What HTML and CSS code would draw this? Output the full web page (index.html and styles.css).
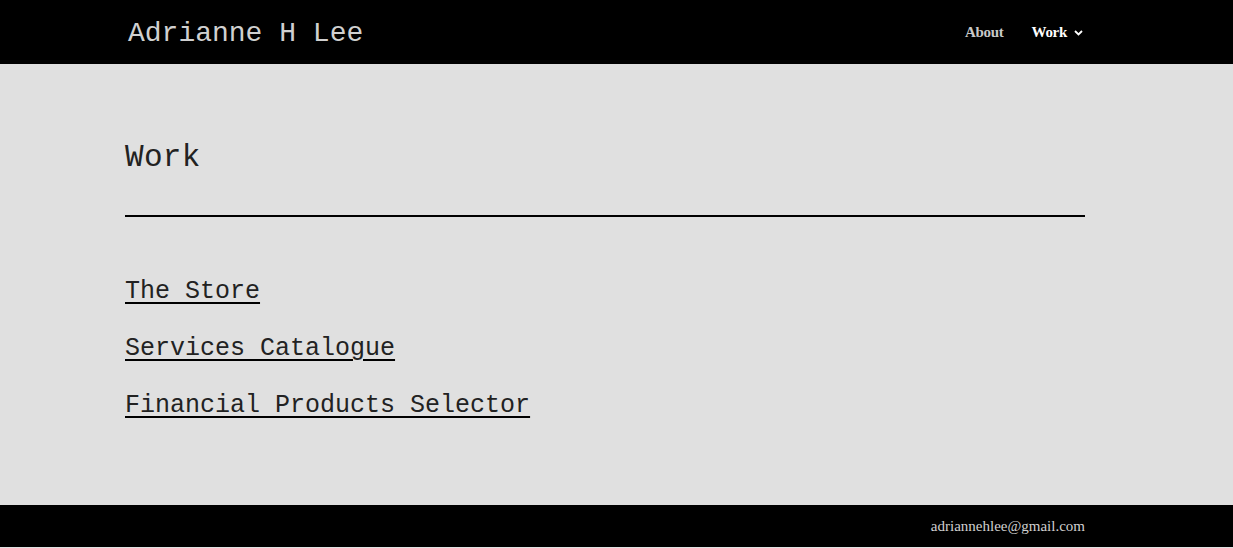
FILE: index.html
```html
<!DOCTYPE html>
<html>
<head>
<meta charset="utf-8">
<link rel="stylesheet" href="styles.css">
</head>
<body>
<header class="site-header">
  <div class="wrap header-inner">
    <a class="brand" href="#">Adrianne H Lee</a>
    <nav class="nav">
      <a class="nav-link" href="#">About</a>
      <a class="nav-link active" href="#">Work
        <svg class="chev" width="9" height="6" viewBox="0 0 9 6"><path d="M1 1 L4.5 4.5 L8 1" fill="none" stroke="#fff" stroke-width="1.8"/></svg>
      </a>
    </nav>
  </div>
</header>
<main class="main">
  <div class="wrap">
    <h1 class="page-title">Work</h1>
    <hr class="rule">
    <ul class="work-list">
      <li><a href="#">The Store</a></li>
      <li><a href="#">Services Catalogue</a></li>
      <li><a href="#">Financial Products Selector</a></li>
    </ul>
  </div>
</main>
<footer class="site-footer">
  <div class="wrap footer-inner">
    <span class="email">adriannehlee@gmail.com</span>
  </div>
</footer>
</body>
</html>
```

FILE: styles.css
```css
html, body { margin: 0; padding: 0; }
body {
  background: #e0e0e0;
  font-family: "Liberation Mono", "DejaVu Sans Mono", monospace;
  color: #1a1a1a;
}
.wrap {
  width: 960px;
  margin-left: 125px;
}
.site-header {
  background: #000;
  height: 64px;
}
.header-inner {
  height: 64px;
  display: flex;
  align-items: center;
  justify-content: space-between;
}
.brand {
  color: #d0d0d0;
  text-decoration: none;
  font-size: 28px;
  letter-spacing: 0px;
  padding-left: 3px;
  padding-top: 3px;
}
.nav {
  display: flex;
  gap: 28px;
  align-items: center;
  padding-top: 1px;
}
.nav-link {
  font-family: "Liberation Serif", serif;
  font-weight: bold;
  font-size: 15px;
  color: #c8c8c8;
  text-decoration: none;
  display: flex;
  align-items: center;
  gap: 7px;
  letter-spacing: -0.3px;
}
.nav-link.active { color: #fff; margin-right: 2px; }
.chev { margin-top: 1px; }
.main {
  min-height: 441px;
}
.page-title {
  margin: 0;
  padding-top: 75px;
  font-weight: normal;
  font-size: 31px;
  letter-spacing: 0.3px;
  line-height: 38px;
  color: #222;
}
.rule {
  margin: 38px 0 0 0;
  border: 0;
  height: 2px;
  background: #000;
}
.work-list {
  list-style: none;
  margin: 0;
  padding: 60px 0 0 0;
}
.work-list li {
  height: 57px;
}
.work-list a {
  font-size: 25px;
  line-height: 30px;
  color: #222;
  text-decoration: underline;
  text-decoration-thickness: 2px;
  text-underline-offset: 4px;
  text-decoration-color: #000;
  letter-spacing: 0px;
}
.site-footer {
  background: #000;
  height: 42px;
}
.footer-inner {
  height: 42px;
  display: flex;
  justify-content: flex-end;
  align-items: center;
}
.email {
  font-family: "Liberation Serif", serif;
  font-size: 15px;
  color: #d0d0d0;
}
```
